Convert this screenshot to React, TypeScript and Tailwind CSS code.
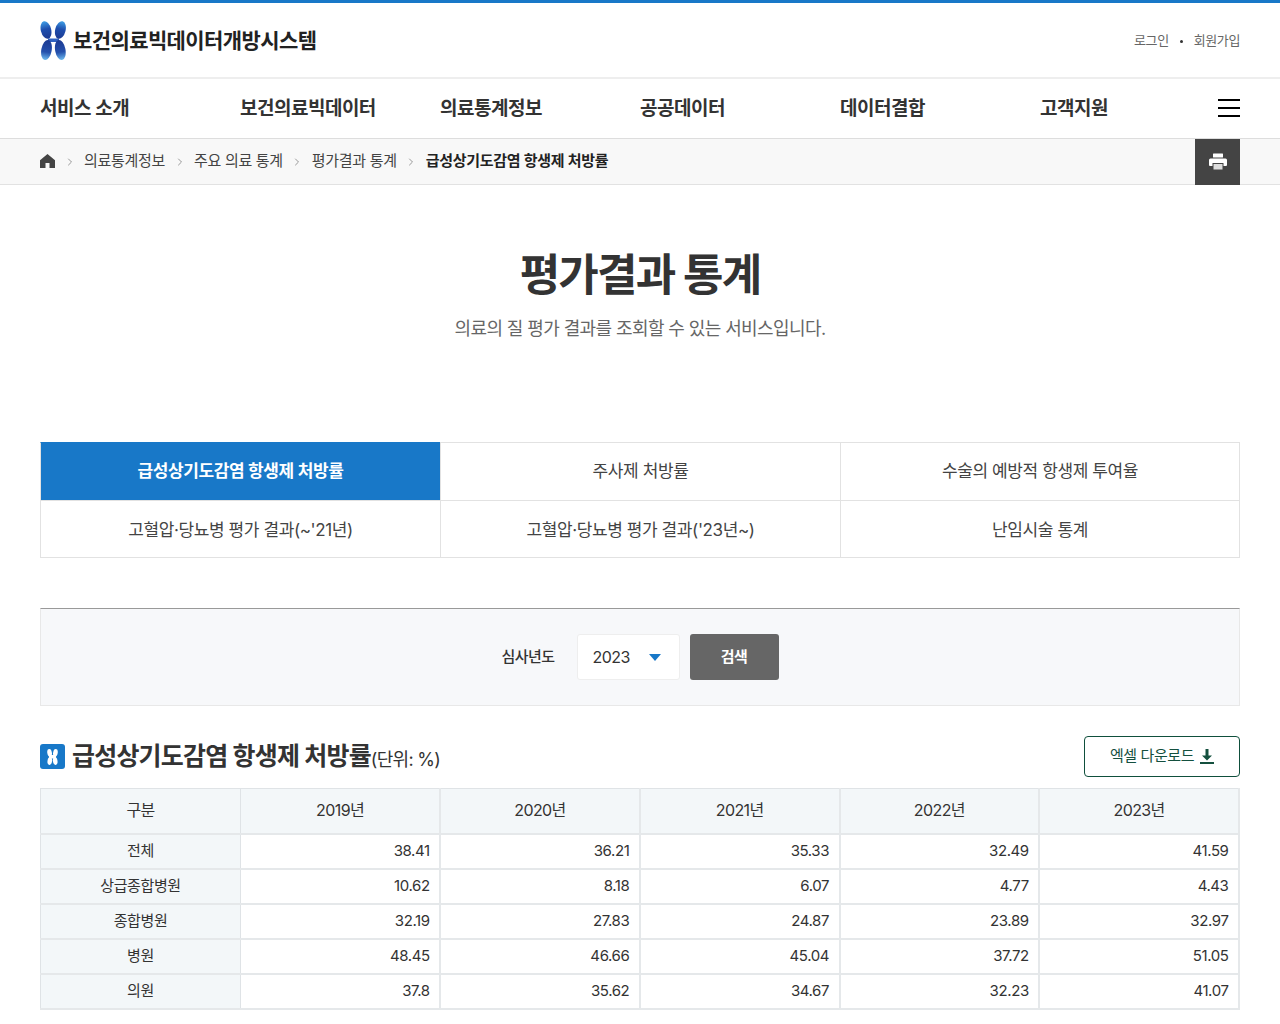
import React from 'react';
import { ChevronRight } from 'lucide-react';

const menus = ['서비스 소개', '보건의료빅데이터', '의료통계정보', '공공데이터', '데이터결합', '고객지원'];
const crumbs = ['의료통계정보', '주요 의료 통계', '평가결과 통계'];
const tabs = [
  '급성상기도감염 항생제 처방률',
  '주사제 처방률',
  '수술의 예방적 항생제 투여율',
  "고혈압·당뇨병 평가 결과(~'21년)",
  "고혈압·당뇨병 평가 결과('23년~)",
  '난임시술 통계',
];
const years = ['2019년', '2020년', '2021년', '2022년', '2023년'];
const rows = [
  { name: '전체', values: ['38.41', '36.21', '35.33', '32.49', '41.59'] },
  { name: '상급종합병원', values: ['10.62', '8.18', '6.07', '4.77', '4.43'] },
  { name: '종합병원', values: ['32.19', '27.83', '24.87', '23.89', '32.97'] },
  { name: '병원', values: ['48.45', '46.66', '45.04', '37.72', '51.05'] },
  { name: '의원', values: ['37.8', '35.62', '34.67', '32.23', '41.07'] },
];

function Logo() {
  return (
    <svg width="27" height="40" viewBox="0 0 27 40" className="shrink-0">
      <defs>
        <linearGradient id="top" x1="0" y1="0" x2="0" y2="1">
          <stop offset="0" stopColor="#3f9fe6" />
          <stop offset="0.45" stopColor="#1f4fae" />
          <stop offset="1" stopColor="#1c3a92" />
        </linearGradient>
        <linearGradient id="bottom" x1="0" y1="0" x2="0" y2="1">
          <stop offset="0" stopColor="#1c3a92" />
          <stop offset="0.6" stopColor="#2450ac" />
          <stop offset="1" stopColor="#6fbcf0" />
        </linearGradient>
      </defs>
      <rect x="8" y="17.500" width="11" height="3.500" fill="#2f62c0" />
      <ellipse cx="6" cy="9" rx="5.200" ry="9" transform="rotate(-14 6 9)" fill="url(#top)" />
      <ellipse cx="20.400" cy="9" rx="5.200" ry="9" transform="rotate(14 20.400 9)" fill="url(#top)" />
      <ellipse cx="6.500" cy="29" rx="5.200" ry="10.200" transform="rotate(10 6.500 29)" fill="url(#bottom)" />
      <ellipse cx="20.300" cy="29" rx="5.200" ry="10.200" transform="rotate(-10 20.300 29)" fill="url(#bottom)" />
    </svg>
  );
}

function PrintIcon() {
  return (
    <svg width="18" height="17" viewBox="0 0 18 17" fill="#fff">
      <rect x="4" y="0.500" width="10" height="4" rx="0.500" />
      <path d="M1.500 5.500h15a1.500 1.500 0 0 1 1.500 1.500v5a1 1 0 0 1-1 1h-2.500v-3h-11v3H1a1 1 0 0 1-1-1V7a1.500 1.500 0 0 1 1.500-1.500z" />
      <rect x="4.500" y="11" width="9" height="5.500" fill="#ddd" />
    </svg>
  );
}

export default function App() {
  return (
    <div className="h-[1024px] overflow-hidden bg-white text-[#333] font-['Inter','Noto_Sans_CJK_KR',sans-serif] tracking-[-0.4px]">
      <div className="h-[3px] bg-[#1878c8]" />

      <header className="h-[74px] border-b-2 border-[#eeeeee] box-content">
        <div className="flex h-full items-center justify-between px-10 pt-[2px]">
          <div className="flex items-center gap-[6px]">
            <Logo />
            <span className="text-[21px] font-bold tracking-[-0.6px] text-[#222]">보건의료빅데이터개방시스템</span>
          </div>
          <div className="flex items-center gap-[11px] text-[13px] text-[#666] tracking-[-0.4px]">
            <span>로그인</span>
            <span className="h-[3px] w-[3px] rounded-full bg-[#333]" />
            <span>회원가입</span>
          </div>
        </div>
      </header>

      <nav className="flex h-[60px] items-center border-b border-[#dddddd] px-10 shadow-[0_1px_2px_rgba(0,0,0,0.04)]">
        {menus.map((m, i) => (
          <div key={m} className={i === 5 ? 'w-[178px] shrink-0 pt-[2px] text-[19px] font-semibold tracking-[-0.5px] text-[#333]' : 'w-[200px] shrink-0 pt-[2px] text-[19px] font-semibold tracking-[-0.5px] text-[#333]'}>{m}</div>
        ))}
        <div className="mb-[2px] flex h-[18px] w-[22px] flex-col justify-between">
          <span className="h-[2px] bg-black" />
          <span className="h-[2px] bg-black" />
          <span className="h-[2px] bg-black" />
        </div>
      </nav>

      <div className="flex h-[46px] items-center justify-between border-b border-[#e2e2e2] bg-[#f8f8f8] px-10">
        <div className="flex items-center text-[15px] tracking-[-0.3px] text-[#444]">
          <svg width="15" height="14" viewBox="0 0 15 14" fill="#444" className="mr-[2px] mb-[2px]">
            <path d="M7.500 0 15 6.300V14H9.500V9h-4v5H0V6.300z" />
          </svg>
          {crumbs.map((c) => (
            <React.Fragment key={c}>
              <ChevronRight className="mx-[6.5px] h-3 w-3 text-[#999]" strokeWidth={2} />
              <span className="px-[2px]">{c}</span>
            </React.Fragment>
          ))}
          <ChevronRight className="mx-[6.5px] h-3 w-3 text-[#999]" strokeWidth={2} />
          <span className="px-[2px] font-semibold text-[#222]">급성상기도감염 항생제 처방률</span>
        </div>
        <div className="flex h-[46px] w-[45px] items-center justify-center bg-[#444]">
          <PrintIcon />
        </div>
      </div>

      <main className="px-10">
        <div className="flex flex-col items-center pt-[60px]">
          <h1 className="text-[44px] leading-[60px] font-bold tracking-[-1.8px] text-[#333]">평가결과 통계</h1>
          <p className="mt-[10px] text-[18px] leading-[28px] tracking-[-0.6px] text-[#666]">의료의 질 평가 결과를 조회할 수 있는 서비스입니다.</p>
        </div>

        <div className="mt-[99px] grid grid-cols-3">
          {tabs.map((t, i) => (
            <div
              key={t}
              className={
                i === 0
                  ? 'flex h-[58px] items-center justify-center border-l border-t border-l-[#e2e2e2] border-t-[#1878c8] bg-[#1878c8] text-[17px] font-semibold text-white'
                  : i === 2
                    ? 'flex h-[58px] items-center justify-center border-x border-t border-[#e2e2e2] text-[17px] text-[#444]'
                    : i === 5
                      ? 'flex h-[58px] items-center justify-center border-x border-y border-[#e2e2e2] pt-[3px] text-[17px] text-[#444]'
                      : i > 2
                        ? 'flex h-[58px] items-center justify-center border-l border-y border-[#e2e2e2] pt-[3px] text-[17px] text-[#444]'
                        : 'flex h-[58px] items-center justify-center border-l border-t border-[#e2e2e2] text-[17px] text-[#444]'
              }
            >
              {t}
            </div>
          ))}
        </div>

        <div className="mt-[50px] flex h-[98px] items-center justify-center border border-t-[#999] border-x-[#e8e8e8] border-b-[#e8e8e8] bg-[#f7f8fa]">
          <span className="text-[15px] font-medium tracking-[-0.5px] text-[#333]">심사년도</span>
          <div className="ml-[22px] flex h-[46px] w-[103px] items-center justify-between rounded-[3px] border border-[#eeeeee] bg-white pl-[15px] pr-[18px] text-[16px] tracking-[-0.6px] text-[#333]">
            <span>2023</span>
            <span className="h-0 w-0 border-x-[6px] border-t-[7px] border-x-transparent border-t-[#1878c8]" />
          </div>
          <button className="ml-[10px] h-[46px] w-[89px] rounded-[3px] bg-[#666666] text-[15px] font-semibold text-white">검색</button>
        </div>

        <div className="mt-[30px] flex h-[41px] items-center justify-between">
          <div className="flex items-center">
            <div className="flex h-[25px] w-[25px] items-center justify-center rounded-[3px] bg-[#1878c8]">
              <svg width="13" height="16" viewBox="0 0 13 16" fill="#fff">
                <ellipse cx="3.600" cy="3.800" rx="2.300" ry="3.800" transform="rotate(-10 3.600 3.800)" />
                <ellipse cx="9.400" cy="3.800" rx="2.300" ry="3.800" transform="rotate(10 9.400 3.800)" />
                <ellipse cx="3.800" cy="12" rx="2.300" ry="4" transform="rotate(8 3.800 12)" />
                <ellipse cx="9.200" cy="12" rx="2.300" ry="4" transform="rotate(-8 9.200 12)" />
                <rect x="3" y="6" width="7" height="3.500" />
              </svg>
            </div>
            <h2 className="ml-[7px] text-[25px] font-bold tracking-[-0.8px] text-[#333]">급성상기도감염 항생제 처방률</h2>
            <span className="mt-[5px] text-[18px] tracking-[-0.7px] text-[#333]">(단위: %)</span>
          </div>
          <button className="flex h-[41px] w-[156px] items-center justify-center gap-[6px] rounded-[4px] border border-[#0f4f3c] text-[15px] tracking-[-0.4px] text-[#14503e]">
            엑셀 다운로드
            <svg width="14" height="15" viewBox="0 0 14 15" fill="#14503e">
              <path d="M5.500 0h3v6.500H12L7 11.500 2 6.500h3.500z" />
              <rect x="0" y="13" width="14" height="2" />
            </svg>
          </button>
        </div>

        <table className="mt-[11px] w-full table-fixed border-collapse border border-[#dfe3e6] text-[15px] text-[#333]">
          <thead>
            <tr className="h-[45px] border-b-2 border-[#e5e8ea] bg-[#f3f7f9] text-[16px] tracking-[-0.6px]">
              <th className="w-[200px] border-r border-[#dfe3e6] pb-[2px] font-normal">구분</th>
              {years.map((y) => (
                <th key={y} className="border-r-2 border-[#e5e8ea] pb-[2px] font-normal">{y}</th>
              ))}
            </tr>
          </thead>
          <tbody>
            {rows.map((r) => (
              <tr key={r.name} className="h-[35px] border-b-2 border-[#e5e8ea]">
                <td className="border-r border-[#dfe3e6] bg-[#f3f7f9] text-center">{r.name}</td>
                {r.values.map((v, i) => (
                  <td key={i} className="border-r-2 border-[#e5e8ea] pr-[9.5px] text-right">{v}</td>
                ))}
              </tr>
            ))}
          </tbody>
        </table>
      </main>
    </div>
  );
}
